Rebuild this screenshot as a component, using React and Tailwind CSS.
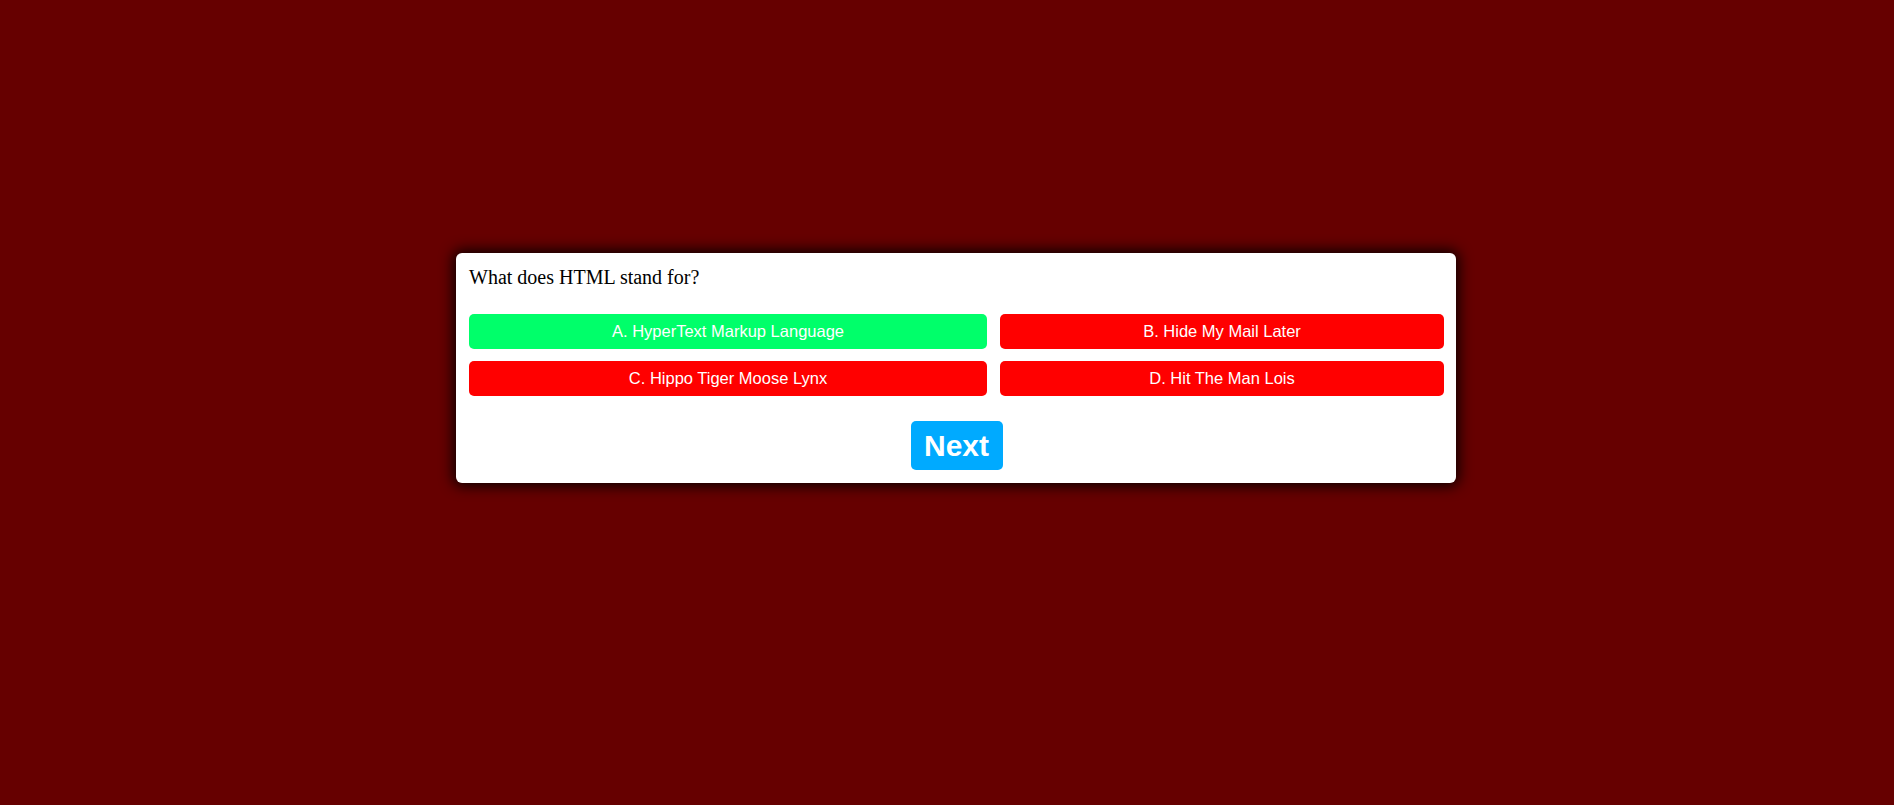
const answers = [
  { label: 'A. HyperText Markup Language', correct: true },
  { label: 'B. Hide My Mail Later', correct: false },
  { label: 'C. Hippo Tiger Moose Lynx', correct: false },
  { label: 'D. Hit The Man Lois', correct: false },
];

export default function App() {
  return (
    <div className="min-h-[805px] w-full bg-[#660000] pt-[253px] pl-[456px]">
      <div className="w-[1000px] h-[230px] bg-white rounded-[6px] shadow-[0_0_14px_3px_rgba(0,0,0,0.9)] pt-[13px] pl-[13px] pr-[12px] pb-[13px] flex flex-col">
        <h2 className="font-['Liberation_Serif',serif] text-[20px] leading-[23px] text-black">
          What does HTML stand for?
        </h2>

        <div className="mt-[25px] grid grid-cols-[518px_444px] gap-x-[13px] gap-y-[12px]">
          {answers.map((a) => (
            <button
              key={a.label}
              className={`h-[35px] rounded-[5px] text-white font-['Liberation_Sans',Arial,sans-serif] text-[16.5px] ${
                a.correct ? 'bg-[#00ff6a]' : 'bg-[#ff0000]'
              }`}
            >
              {a.label}
            </button>
          ))}
        </div>

        <div className="mt-[25px] flex justify-center">
          <button className="h-[49px] w-[92px] rounded-[5px] bg-[#00aaff] text-white font-bold font-['Liberation_Sans',Arial,sans-serif] text-[30px] leading-none">
            Next
          </button>
        </div>
      </div>
    </div>
  );
}
